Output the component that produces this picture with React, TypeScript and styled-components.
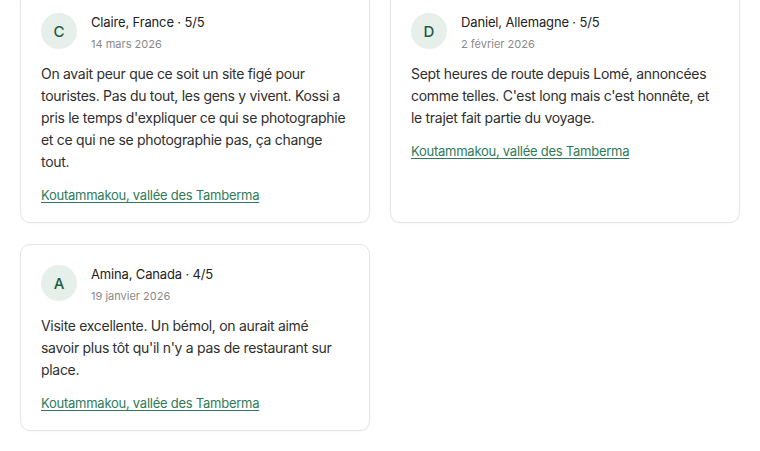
import React from 'react';
import styled, { createGlobalStyle } from 'styled-components';

const GlobalStyle = createGlobalStyle`
  body {
    margin: 0;
    background: #ffffff;
    font-family: Inter, "Noto Sans", sans-serif;
    color: #2b2b2b;
  }
`;

const Page = styled.div`
  padding: 0 20px 20px;
  margin-top: -8px;
`;

const Grid = styled.div`
  display: grid;
  grid-template-columns: 350px 350px;
  gap: 21px 20px;
`;

const Card = styled.article`
  border: 1px solid #e4e6e5;
  border-radius: 10px;
  padding: 20px 20px 18px;
  background: #fff;
  box-shadow: 0 1px 2px rgba(0, 0, 0, 0.03);
`;

const Header = styled.div`
  display: flex;
  align-items: flex-start;
  gap: 14px;
  margin-bottom: 10px;
`;

const Avatar = styled.div`
  width: 36px;
  height: 36px;
  border-radius: 50%;
  background: #e7efeb;
  color: #1d5a43;
  display: flex;
  align-items: center;
  justify-content: center;
  font-size: 15px;
  font-weight: 500;
  flex-shrink: 0;
`;

const Meta = styled.div`
  display: flex;
  flex-direction: column;
  gap: 4px;
`;

const Name = styled.div`
  font-size: 13px;
  line-height: 18px;
  letter-spacing: -0.15px;
  color: #222;
`;

const DateText = styled.div`
  font-size: 11px;
  line-height: 18px;
  color: #8a8a8a;
`;

const Body = styled.p`
  margin: 0 0 13px;
  font-size: 14px;
  line-height: 22px;
  letter-spacing: -0.3px;
  color: #2f2f2f;
`;

const PlaceLink = styled.a`
  display: block;
  font-size: 13px;
  line-height: 18px;
  letter-spacing: -0.25px;
  color: #2f7a5a;
  text-decoration: underline;
  text-underline-offset: 2px;
`;

type Review = {
  initial: string;
  name: string;
  date: string;
  text: string;
};

const reviews: Review[] = [
  {
    initial: 'C',
    name: 'Claire, France · 5/5',
    date: '14 mars 2026',
    text: "On avait peur que ce soit un site figé pour touristes. Pas du tout, les gens y vivent. Kossi a pris le temps d'expliquer ce qui se photographie et ce qui ne se photographie pas, ça change tout.",
  },
  {
    initial: 'D',
    name: 'Daniel, Allemagne · 5/5',
    date: '2 février 2026',
    text: "Sept heures de route depuis Lomé, annoncées comme telles. C'est long mais c'est honnête, et le trajet fait partie du voyage.",
  },
  {
    initial: 'A',
    name: 'Amina, Canada · 4/5',
    date: '19 janvier 2026',
    text: "Visite excellente. Un bémol, on aurait aimé savoir plus tôt qu'il n'y a pas de restaurant sur place.",
  },
];

const App: React.FC = () => {
  return (
    <>
      <GlobalStyle />
      <Page>
        <Grid>
          {reviews.map(r => (
            <Card key={r.initial}>
              <Header>
                <Avatar>{r.initial}</Avatar>
                <Meta>
                  <Name>{r.name}</Name>
                  <DateText>{r.date}</DateText>
                </Meta>
              </Header>
              <Body>{r.text}</Body>
              <PlaceLink href="#">Koutammakou, vallée des Tamberma</PlaceLink>
            </Card>
          ))}
        </Grid>
      </Page>
    </>
  );
};

export default App;
